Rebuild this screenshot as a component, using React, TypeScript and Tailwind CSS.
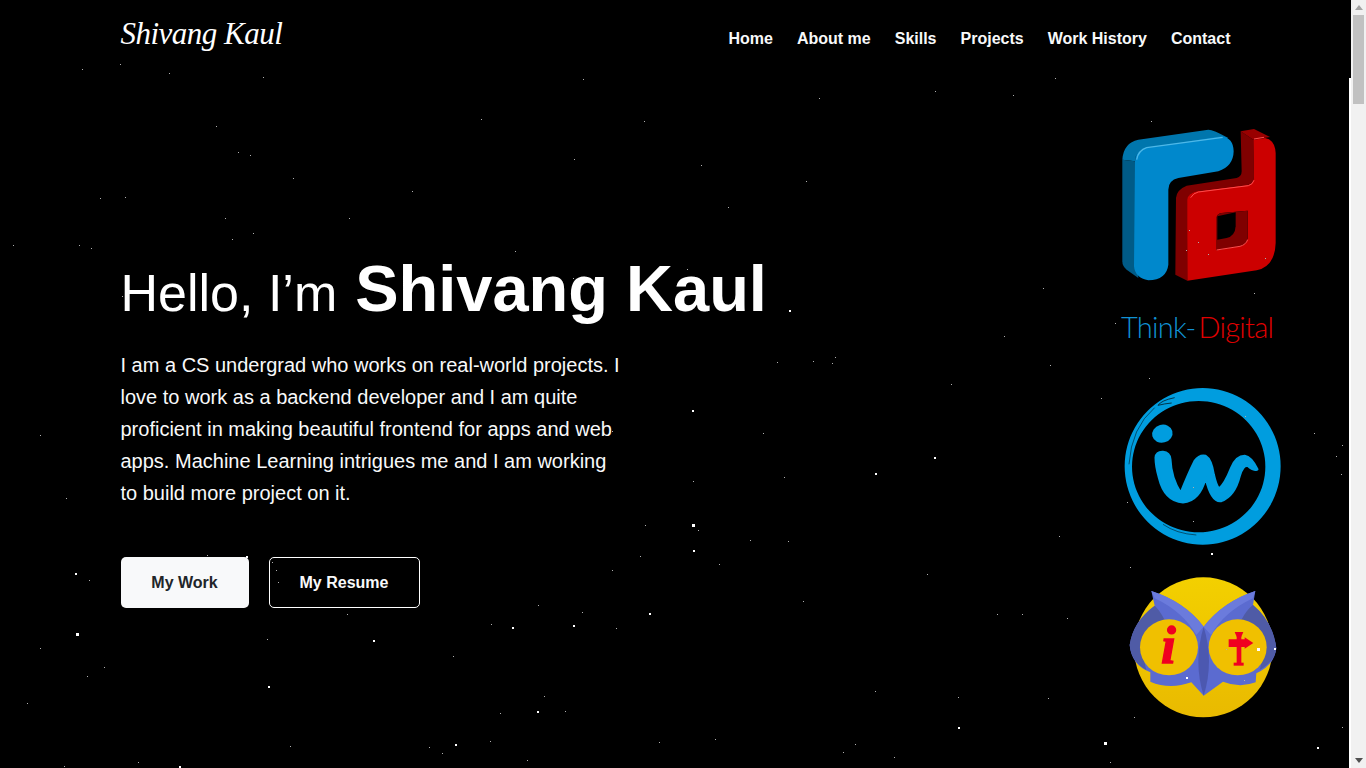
const NAV_LINKS = ["Home", "About me", "Skills", "Projects", "Work History", "Contact"];

// small faint stars, read off the reference
const SMALL_STARS = [
  [82, 69], [120, 64], [169, 73], [263, 77], [216, 126], [238, 152], [250, 155], [293, 178], [412, 191], [100, 198],
  [125, 197], [225, 218], [349, 218], [253, 233], [232, 239], [13, 245], [79, 245], [91, 248], [122, 296], [583, 79],
  [819, 98], [481, 119], [644, 121], [574, 159], [701, 165], [806, 181], [728, 207], [515, 251], [687, 269], [573, 278],
  [1115, 323], [1004, 336], [835, 357], [813, 361], [777, 362], [832, 363], [1050, 365], [951, 384], [1101, 398], [763, 433],
  [784, 477], [693, 481], [645, 525], [698, 530], [750, 540], [1059, 536], [788, 541], [640, 556], [719, 564], [927, 574],
  [803, 601], [997, 614], [1022, 614], [1067, 618], [875, 691], [958, 697], [1048, 698], [659, 742], [715, 739], [855, 744],
  [843, 752], [894, 757], [1110, 762], [89, 580], [40, 648], [104, 667], [87, 676], [27, 703], [64, 766], [138, 762],
  [290, 746], [267, 639], [347, 614], [207, 555], [272, 562], [276, 570], [278, 582], [612, 570], [538, 605], [582, 612],
  [491, 624], [616, 628], [453, 656], [544, 696], [565, 711], [500, 713], [490, 741], [429, 747], [442, 753], [527, 760],
  [1314, 433], [1342, 445], [1336, 456], [1341, 474], [1342, 727], [1151, 121], [1189, 230], [1198, 242], [1186, 250], [1208, 254],
  [1265, 258], [1254, 293], [1149, 378], [1245, 416], [1193, 487], [1127, 502], [1193, 521], [1130, 567], [1226, 649], [1244, 680],
  [1134, 717], [1013, 95], [935, 91], [1055, 78], [1043, 288], [40, 435], [66, 498], [612, 431],
];

const BIG_STARS = [
  [789, 310, 2], [692, 410, 2], [934, 457, 2], [875, 473, 2], [692, 524, 3], [693, 550, 2], [649, 613, 2], [958, 727, 2],
  [1104, 742, 3], [75, 573, 2], [76, 633, 3], [179, 766, 2], [268, 686, 2], [373, 640, 2], [246, 556, 2], [512, 627, 2],
  [573, 625, 2], [537, 711, 2], [455, 744, 2], [1317, 747, 2], [1211, 553, 2], [1186, 677, 2], [1257, 648, 3], [1274, 648, 2],
];

function Stars() {
  return (
    <svg className="absolute inset-0 pointer-events-none" width="1349" height="768" shapeRendering="crispEdges">
      {SMALL_STARS.map(([x, y], i) => (
        <rect key={i} x={x} y={y} width="1" height="1" fill="#b0b0b0" />
      ))}
      {BIG_STARS.map(([x, y, s], i) => (
        <rect key={i} x={x} y={y} width={s} height={s} fill="#ffffff" />
      ))}
    </svg>
  );
}

function RdLogo() {
  return (
    <svg width="158.33" height="153.33" viewBox="60 55 475 460" className="block">
      {/* blue piece */}
      <path d="M67 150 Q70 100 115 90 L325 60 Q340 60 385 85 L135 118 Q105 125 105 155 Z" fill="#0076ad" />
      <path d="M67 150 L105 155 L115 505 L80 480 Q67 470 67 455 Z" fill="#005b87" />
      <path d="M105 155 Q105 125 135 116 L365 80 Q400 85 401 125 Q400 170 355 185 L235 205 Q205 212 205 240 L205 465 Q200 510 145 512 Q105 505 102 470 Z" fill="#0088cc" />
      <path d="M110 150 Q115 122 140 114 L368 83" fill="none" stroke="#4db8e8" strokeWidth="4" />
      {/* red piece */}
      <path d="M228 265 Q230 240 260 228 L410 205 Q425 200 425 185 L422 65 L460 90 L462 200 Q462 220 445 225 L290 245 Q265 250 265 270 L262 513 L226 495 Z" fill="#7f0000" />
      <path d="M422 65 L462 58 L510 82 L460 90 Z" fill="#990000" />
      <path fillRule="evenodd" d="M460 90 L495 85 Q525 90 527 130 L527 400 Q525 470 470 482 L262 513 L262 270 Q265 250 290 245 L445 225 Q462 220 462 200 Z M350 322 Q352 312 365 310 L443 303 L443 385 Q440 405 420 410 L350 422 Z" fill="#cc0000" />
      <path d="M350 322 Q352 312 365 310 L443 303 L443 385 Q440 405 420 410 L350 422 Z" fill="#7f0000" />
      <path d="M352 320 L407 308 L407 350 Q405 380 380 385 L352 390 Z" fill="#000000" />
      <path d="M350 421 L420 410 Q438 405 443 390" fill="none" stroke="#ff4d4d" strokeWidth="3" />
      <path d="M272 264 Q280 250 295 247 L445 228 Q458 225 462 212" fill="none" stroke="#ff4d4d" strokeWidth="3" />
      <path d="M462 88 L492 83" fill="none" stroke="#ff4d4d" strokeWidth="3" />
    </svg>
  );
}

function IwLogo() {
  return (
    <svg width="159.33" height="160.67" viewBox="70 35 478 482" className="block">
      <path fillRule="evenodd" d="M309 41 A234 235 0 1 1 308.9 41 Z M297 80 A200 197 0 1 0 297.1 80 Z" fill="#009ddf" />
      <path d="M216 86 Q195 88 175 93 Q185 78 225 70" fill="none" stroke="#000000" strokeWidth="2" />
      <path d="M165 100 Q95 160 88 270" fill="none" stroke="#000000" strokeWidth="1.5" />
      <path d="M190 450 Q230 478 290 482" fill="none" stroke="#000000" strokeWidth="1.5" />
      <ellipse cx="188" cy="178" rx="31" ry="27" transform="rotate(-15 188 178)" fill="#009ddf" />
      <path d="M168 250 Q170 232 190 233 Q210 235 212 255 Q214 310 243 356 Q265 300 285 260 Q300 240 318 245 Q335 255 342 300 Q350 335 358 343 Q375 330 395 280 Q410 245 435 245 Q455 248 473 285 Q460 290 445 275 Q430 270 420 305 Q405 365 365 380 Q335 385 318 310 Q300 380 250 384 Q195 380 178 310 Q168 275 168 250 Z" fill="#009ddf" stroke="#009ddf" strokeWidth="7" strokeLinejoin="round" />
    </svg>
  );
}

function OwlLogo() {
  return (
    <svg width="150" height="143.33" viewBox="55 30 450 430" className="block">
      <defs>
        <linearGradient id="owlFace" x1="0" y1="0" x2="0" y2="1">
          <stop offset="0" stopColor="#f3d000" />
          <stop offset="1" stopColor="#e9ba00" />
        </linearGradient>
      </defs>
      <ellipse cx="281" cy="247" rx="208" ry="210" fill="url(#owlFace)" />
      <path d="M125 78 Q225 110 282 185 Q340 110 437 78 L430 120 Q490 170 500 250 Q495 300 440 325 L438 352 Q390 370 340 350 L282 392 L245 352 Q180 375 122 350 L122 322 Q65 300 60 240 Q70 170 135 122 Z" fill="#5b6bd0" />
      <path d="M125 78 Q225 110 282 185 L260 210 Q220 140 135 100 Z" fill="#6b7bdc" />
      <path d="M437 78 Q340 110 282 185 L304 210 Q344 140 430 100 Z" fill="#6b7bdc" />
      <path d="M135 122 Q70 170 60 240 Q65 290 110 315 Q85 240 165 165 Q150 135 135 122 Z" fill="#4f5ba6" />
      <path d="M430 120 Q490 170 500 250 Q495 290 450 315 Q475 240 395 165 Q410 135 430 120 Z" fill="#4f5ba6" />
      <path d="M282 185 Q250 290 282 392 Q314 290 282 185 Z" fill="#4c58b0" />
      <ellipse cx="178" cy="247" rx="87" ry="84" fill="#f0c000" />
      <ellipse cx="384" cy="247" rx="87" ry="84" fill="#f0c000" />
      <text x="176" y="293" textAnchor="middle" fontFamily="'Liberation Serif', serif" fontWeight="700" fontStyle="italic" fontSize="160" fill="#f00020" stroke="#f00020" strokeWidth="4">i</text>
      <g fill="#f00020">
        <path d="M375 201 H401 L395 215 H381 Z" />
        <path d="M357 223 H405 V217 L431 234 L405 251 V246 H357 Z" />
        <rect x="381" y="245" width="14" height="50" />
        <rect x="372" y="293" width="30" height="9" />
        <rect x="381" y="213" width="14" height="12" />
      </g>
    </svg>
  );
}

function Scrollbar() {
  return (
    <div className="w-[15px] h-full bg-[#f1f1f1] flex flex-col items-center">
      <div className="h-[15px] w-full flex items-center justify-center">
        <svg width="8" height="5" viewBox="0 0 8 5">
          <path d="M4 0 L8 5 H0 Z" fill="#a3a3a3" />
        </svg>
      </div>
      <div className="w-[11px] h-[89px] bg-[#c1c1c1]" />
      <div className="mt-auto h-[15px] w-full flex items-center justify-center">
        <svg width="8" height="5" viewBox="0 0 8 5">
          <path d="M0 0 H8 L4 5 Z" fill="#505050" />
        </svg>
      </div>
    </div>
  );
}

export default function App() {
  return (
    <div className="w-[1366px] h-screen overflow-hidden flex bg-black text-white font-['Liberation_Sans',Arial,sans-serif]">
      <div className="relative flex-1 flex flex-col min-w-0">
        <header className="h-[76px] flex items-start justify-between pl-[120.5px] pr-[118.5px]">
          <a className="mt-[16px] block w-[163px] text-[31px] leading-[36px] italic whitespace-nowrap font-['Liberation_Serif',serif] tracking-[-0.5px]">
            Shivang Kaul
          </a>
          <nav className="flex items-center gap-6 h-[77px] text-base font-bold text-[#f8f9fa]">
            {NAV_LINKS.map((link) => (
              <a key={link}>{link}</a>
            ))}
          </nav>
        </header>

        <div className="flex-1 flex pl-[120.5px] pr-[68px]">
          <main className="flex-1 pt-[177px]">
            <h1 className="text-[52px] leading-[72px] whitespace-nowrap">
              Hello, I’m <span className="ml-[3.5px] text-[65px] font-bold">Shivang Kaul</span>
            </h1>
            <p className="mt-[20px] w-[500px] text-xl leading-8 text-[#f8f9fa]">
              I am a CS undergrad who works on real-world projects. I love to work as a backend developer and I am quite proficient in making beautiful frontend for apps and web apps. Machine Learning intrigues me and I am working to build more project on it.
            </p>
            <div className="mt-[48px] flex gap-5">
              <button className="w-[128px] h-[51px] rounded-[5px] bg-[#f8f9fa] text-base font-bold text-[#212529]">My Work</button>
              <button className="w-[151px] h-[51px] rounded-[5px] border border-white text-base font-bold text-[#f8f9fa]">My Resume</button>
            </div>
          </main>

          <aside className="w-[161px] pt-[52px] flex flex-col">
            <RdLogo />
            <div className="mt-[24px] pl-[1px] h-[43px] text-[29px] leading-[43px] whitespace-nowrap font-light font-['Lato',sans-serif] tracking-[-0.7px]">
              <span className="text-[#1192d4]">Think-</span><span className="ml-[3px] text-[#e00000]">Digital</span>
            </div>
            <div className="mt-[38px] ml-[3px]">
              <IwLogo />
            </div>
            <div className="mt-[28px] ml-[8px]">
              <OwlLogo />
            </div>
          </aside>
        </div>

        <Stars />
      </div>
      <div className="w-[2px] h-full pt-[78px]">
        <div className="h-full bg-white" />
      </div>
      <Scrollbar />
    </div>
  );
}
